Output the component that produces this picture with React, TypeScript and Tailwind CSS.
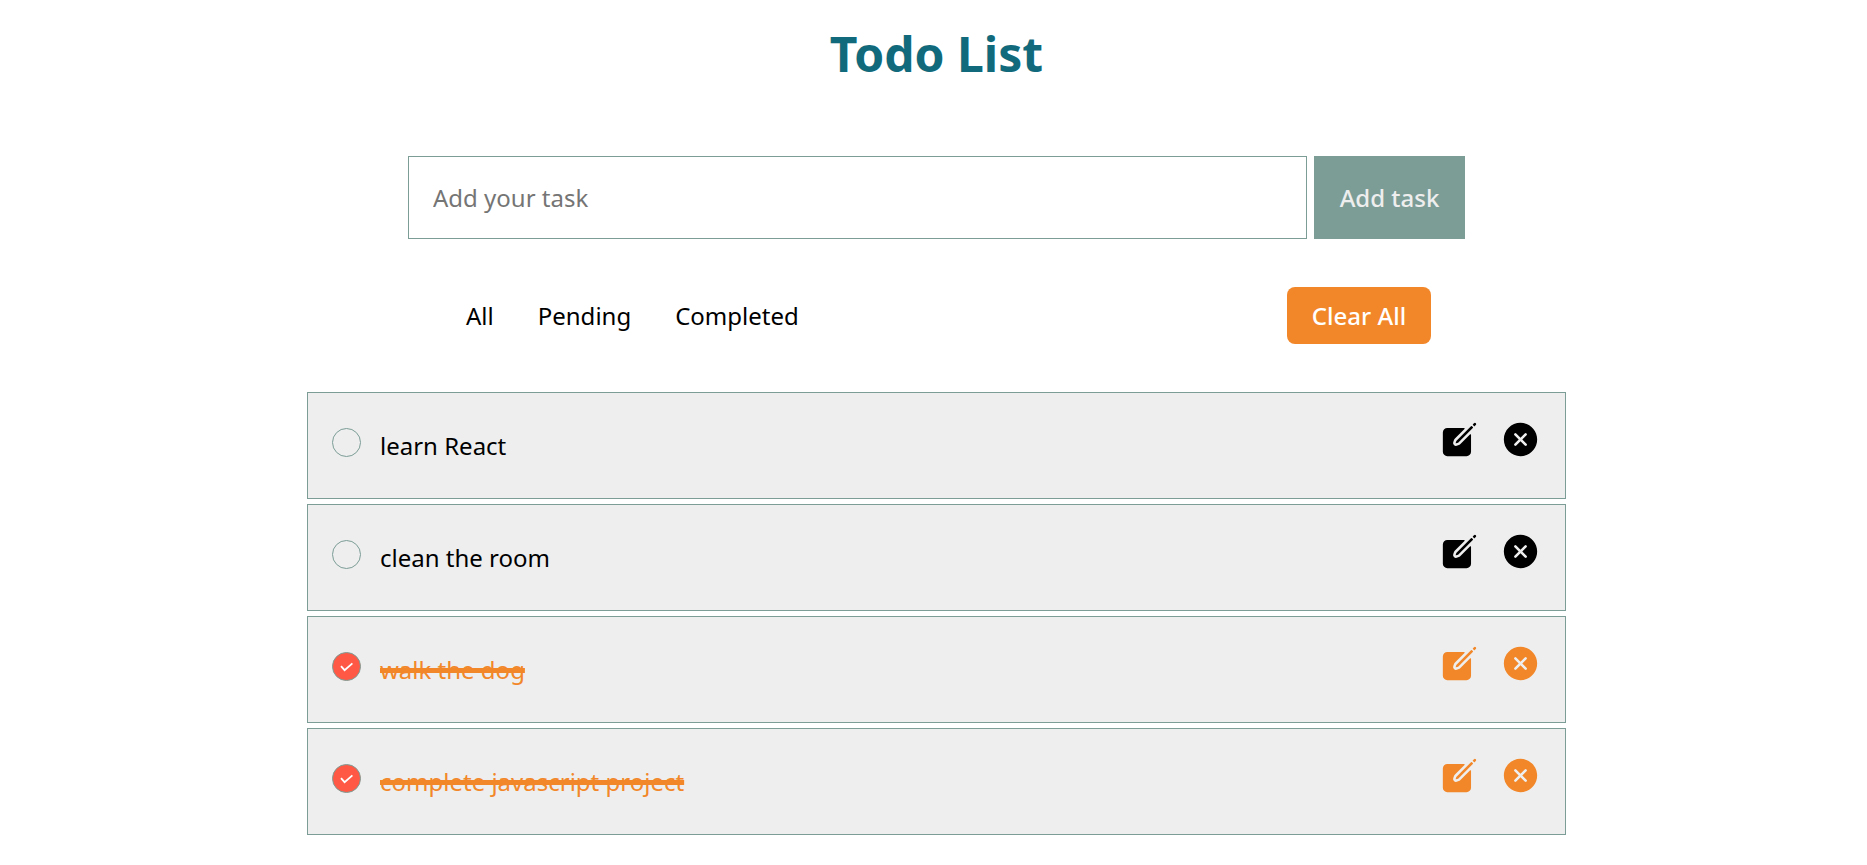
import { useState } from "react";
import type { FormEvent } from "react";
import { IoCreate, IoCloseCircle } from "react-icons/io5";

type Task = { id: number; title: string; done: boolean };
type Filter = "All" | "Pending" | "Completed";

const filters: Filter[] = ["All", "Pending", "Completed"];

const initialTasks: Task[] = [
  { id: 1, title: "learn React", done: false },
  { id: 2, title: "clean the room", done: false },
  { id: 3, title: "walk the dog", done: true },
  { id: 4, title: "complete javascript project", done: true },
];

type TaskRowProps = {
  task: Task;
  onToggle: () => void;
  onEdit: () => void;
  onDelete: () => void;
};

function TaskRow({ task, onToggle, onEdit, onDelete }: TaskRowProps) {
  const fieldId = `task-${task.id}`;
  return (
    <li
      className={`flex justify-between border border-[#7c9d96] bg-[#eeeeee] px-6 pt-[26px] pb-[38px] ${
        task.done ? "text-[#f28729]" : "text-black"
      }`}
    >
      <div className="flex items-center gap-[19px] pt-[6px]">
        <span className="grid size-[29px] place-items-center">
          <input
            id={fieldId}
            type="checkbox"
            checked={task.done}
            onChange={onToggle}
            className="col-start-1 row-start-1 size-[29px] cursor-pointer appearance-none rounded-full border border-[#7c9d96] checked:bg-[#ff5945]"
          />
          {task.done && (
            <svg
              viewBox="0 0 14 10"
              className="pointer-events-none col-start-1 row-start-1 h-[10px] w-[14px]"
              fill="none"
              stroke="white"
              strokeWidth="1.8"
              aria-hidden="true"
            >
              <path d="M1 4.2 4.6 8.2 12.4 1.4" />
            </svg>
          )}
        </span>
        <label
          htmlFor={fieldId}
          className={`cursor-pointer pt-[6px] leading-7 ${task.done ? "line-through decoration-[5px]" : ""}`}
        >
          {task.title}
        </label>
      </div>
      <div className="flex items-center gap-5">
        <button type="button" aria-label={`Edit ${task.title}`} onClick={onEdit} className="cursor-pointer">
          <IoCreate className="size-[41px]" />
        </button>
        <button type="button" aria-label={`Delete ${task.title}`} onClick={onDelete} className="cursor-pointer">
          <IoCloseCircle className="size-[41px]" />
        </button>
      </div>
    </li>
  );
}

export default function App() {
  const [tasks, setTasks] = useState<Task[]>(initialTasks);
  const [filter, setFilter] = useState<Filter>("All");
  const [draft, setDraft] = useState("");

  const visible = tasks.filter((t) => filter === "All" || t.done === (filter === "Completed"));

  const addTask = (event: FormEvent) => {
    event.preventDefault();
    const title = draft.trim();
    if (!title) return;
    setTasks([...tasks, { id: Date.now(), title, done: false }]);
    setDraft("");
  };

  const editTask = (task: Task) => {
    setDraft(task.title);
    setTasks(tasks.filter((t) => t.id !== task.id));
  };

  return (
    <main className="flex flex-col items-center pt-6 pl-[6px] font-['Comic_Sans_MS','Noto_Sans',sans-serif] text-2xl leading-[33px] text-black">
      <h1 className="text-5xl leading-[60px] font-bold text-[#116a7b]">Todo List</h1>

      <form onSubmit={addTask} className="mt-[72px] flex w-full max-w-[1057px] gap-[7px]">
        <input
          type="text"
          aria-label="Add your task"
          placeholder="Add your task"
          value={draft}
          onChange={(e) => setDraft(e.target.value)}
          className="min-w-0 flex-1 border border-[#7c9d96] px-6 py-6 placeholder:text-[#757575]"
        />
        <button type="submit" className="min-w-[151px] cursor-pointer bg-[#7c9d96] px-6 py-[25px] font-medium text-[#eeeeee]">
          Add task
        </button>
      </form>

      <div className="mt-12 flex w-full max-w-[989px] items-center justify-between pl-6">
        <nav className="flex gap-11">
          {filters.map((name) => (
            <button key={name} type="button" onClick={() => setFilter(name)} className="cursor-pointer">
              {name}
            </button>
          ))}
        </nav>
        <button
          type="button"
          onClick={() => setTasks([])}
          className="min-w-36 cursor-pointer rounded-lg bg-[#f28729] px-6 py-3 font-medium text-white"
        >
          Clear All
        </button>
      </div>

      <ul className="mt-12 flex w-full max-w-[1259px] flex-col gap-[5px]">
        {visible.map((task) => (
          <TaskRow
            key={task.id}
            task={task}
            onToggle={() => setTasks(tasks.map((t) => (t.id === task.id ? { ...t, done: !t.done } : t)))}
            onEdit={() => editTask(task)}
            onDelete={() => setTasks(tasks.filter((t) => t.id !== task.id))}
          />
        ))}
      </ul>
    </main>
  );
}
